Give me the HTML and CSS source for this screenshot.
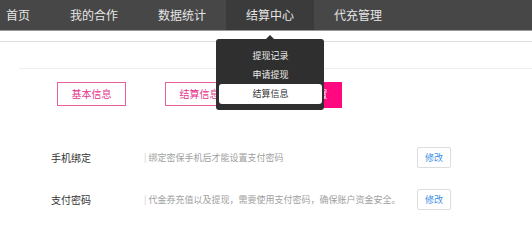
FILE: index.html
```html
<!DOCTYPE html>
<html>
<head>
  <title>结算中心</title>
  <meta charset="utf-8">
  <link rel="stylesheet" href="styles.css">
</head>
<body>
  <div class="nav">
    <div class="nav-item">首页</div>
    <div class="nav-item">我的合作</div>
    <div class="nav-item">数据统计</div>
    <div class="nav-item active">
      结算中心
      <div class="dropdown">
        <div class="dropdown-item">提现记录</div>
        <div class="dropdown-item">申请提现</div>
        <div class="dropdown-item current">结算信息</div>
      </div>
    </div>
    <div class="nav-item">代充管理</div>
  </div>
  <div class="subbar"></div>

  <div class="panel">
    <div class="tabs">
      <div class="tab">基本信息</div>
      <div class="tab">结算信息</div>
      <div class="tab filled">安全设置</div>
    </div>

    <div class="row">
      <div class="row-label">手机绑定</div>
      <div class="row-desc"><span class="bar">|</span> 绑定密保手机后才能设置支付密码</div>
      <button class="edit-button">修改</button>
    </div>
    <div class="row">
      <div class="row-label">支付密码</div>
      <div class="row-desc"><span class="bar">|</span> 代金券充值以及提现，需要使用支付密码，确保账户资金安全。</div>
      <button class="edit-button">修改</button>
    </div>
  </div>
</body>
</html>
```

FILE: styles.css
```css
* {
  margin: 0;
  padding: 0;
  box-sizing: border-box;
}

body {
  font-family: "Noto Sans CJK SC", "Liberation Sans", sans-serif;
  background: #fff;
  color: #333;
  overflow: hidden;
}

.nav {
  display: flex;
  height: 31px;
  margin-left: -14px;
  background: #474747;
  border-bottom: 1px solid #9a9a9a;
}

.nav-item {
  position: relative;
  padding: 0 20px;
  line-height: 30px;
  font-size: 12px;
  color: #e6e6e6;
}

.nav-item.active {
  background: #3b3b3b;
}

.dropdown {
  position: absolute;
  top: 39px;
  left: -10px;
  width: 108px;
  padding: 7px 2px 6px 3px;
  background: #2f2f2f;
  border-radius: 3px;
  text-align: center;
  z-index: 10;
}

.dropdown:before {
  content: "";
  position: absolute;
  top: -4px;
  left: 50%;
  margin-left: -4px;
  border-left: 4px solid transparent;
  border-right: 4px solid transparent;
  border-bottom: 4px solid #2f2f2f;
}

.dropdown-item {
  height: 19px;
  line-height: 19px;
  font-size: 9px;
  color: #f0f0f0;
}

.dropdown-item.current {
  height: 20px;
  line-height: 20px;
  background: #fff;
  color: #333;
  border-radius: 3px;
}

.subbar {
  height: 11px;
  border-bottom: 1px solid #ddd;
}

.panel {
  margin: 26px 0 0 19px;
  padding: 13px 0 0 38px;
  border-top: 1px solid #eee;
}

.tabs {
  display: flex;
  align-items: flex-start;
  gap: 39px;
  margin-bottom: 28px;
}

.tab {
  width: 69px;
  height: 24px;
  line-height: 22px;
  text-align: center;
  font-size: 10px;
  color: #e2358a;
  border: 1px solid #e8619f;
}

.tab.filled {
  height: 26px;
  background: #ff0880;
  border-color: #ff0880;
  color: #fff;
}

.row {
  display: flex;
  align-items: center;
  height: 42px;
  margin-left: -6px;
}

.row-label {
  width: 93px;
  font-size: 10px;
  color: #333;
}

.row-desc {
  width: 273px;
  font-size: 9px;
  color: #a0a0a0;
}

.row-desc .bar {
  color: #ccc;
}

.edit-button {
  width: 34px;
  height: 21px;
  font-family: inherit;
  font-size: 9px;
  color: #3d8ee8;
  background: #fff;
  border: 1px solid #ddd;
  border-radius: 2px;
}
```
